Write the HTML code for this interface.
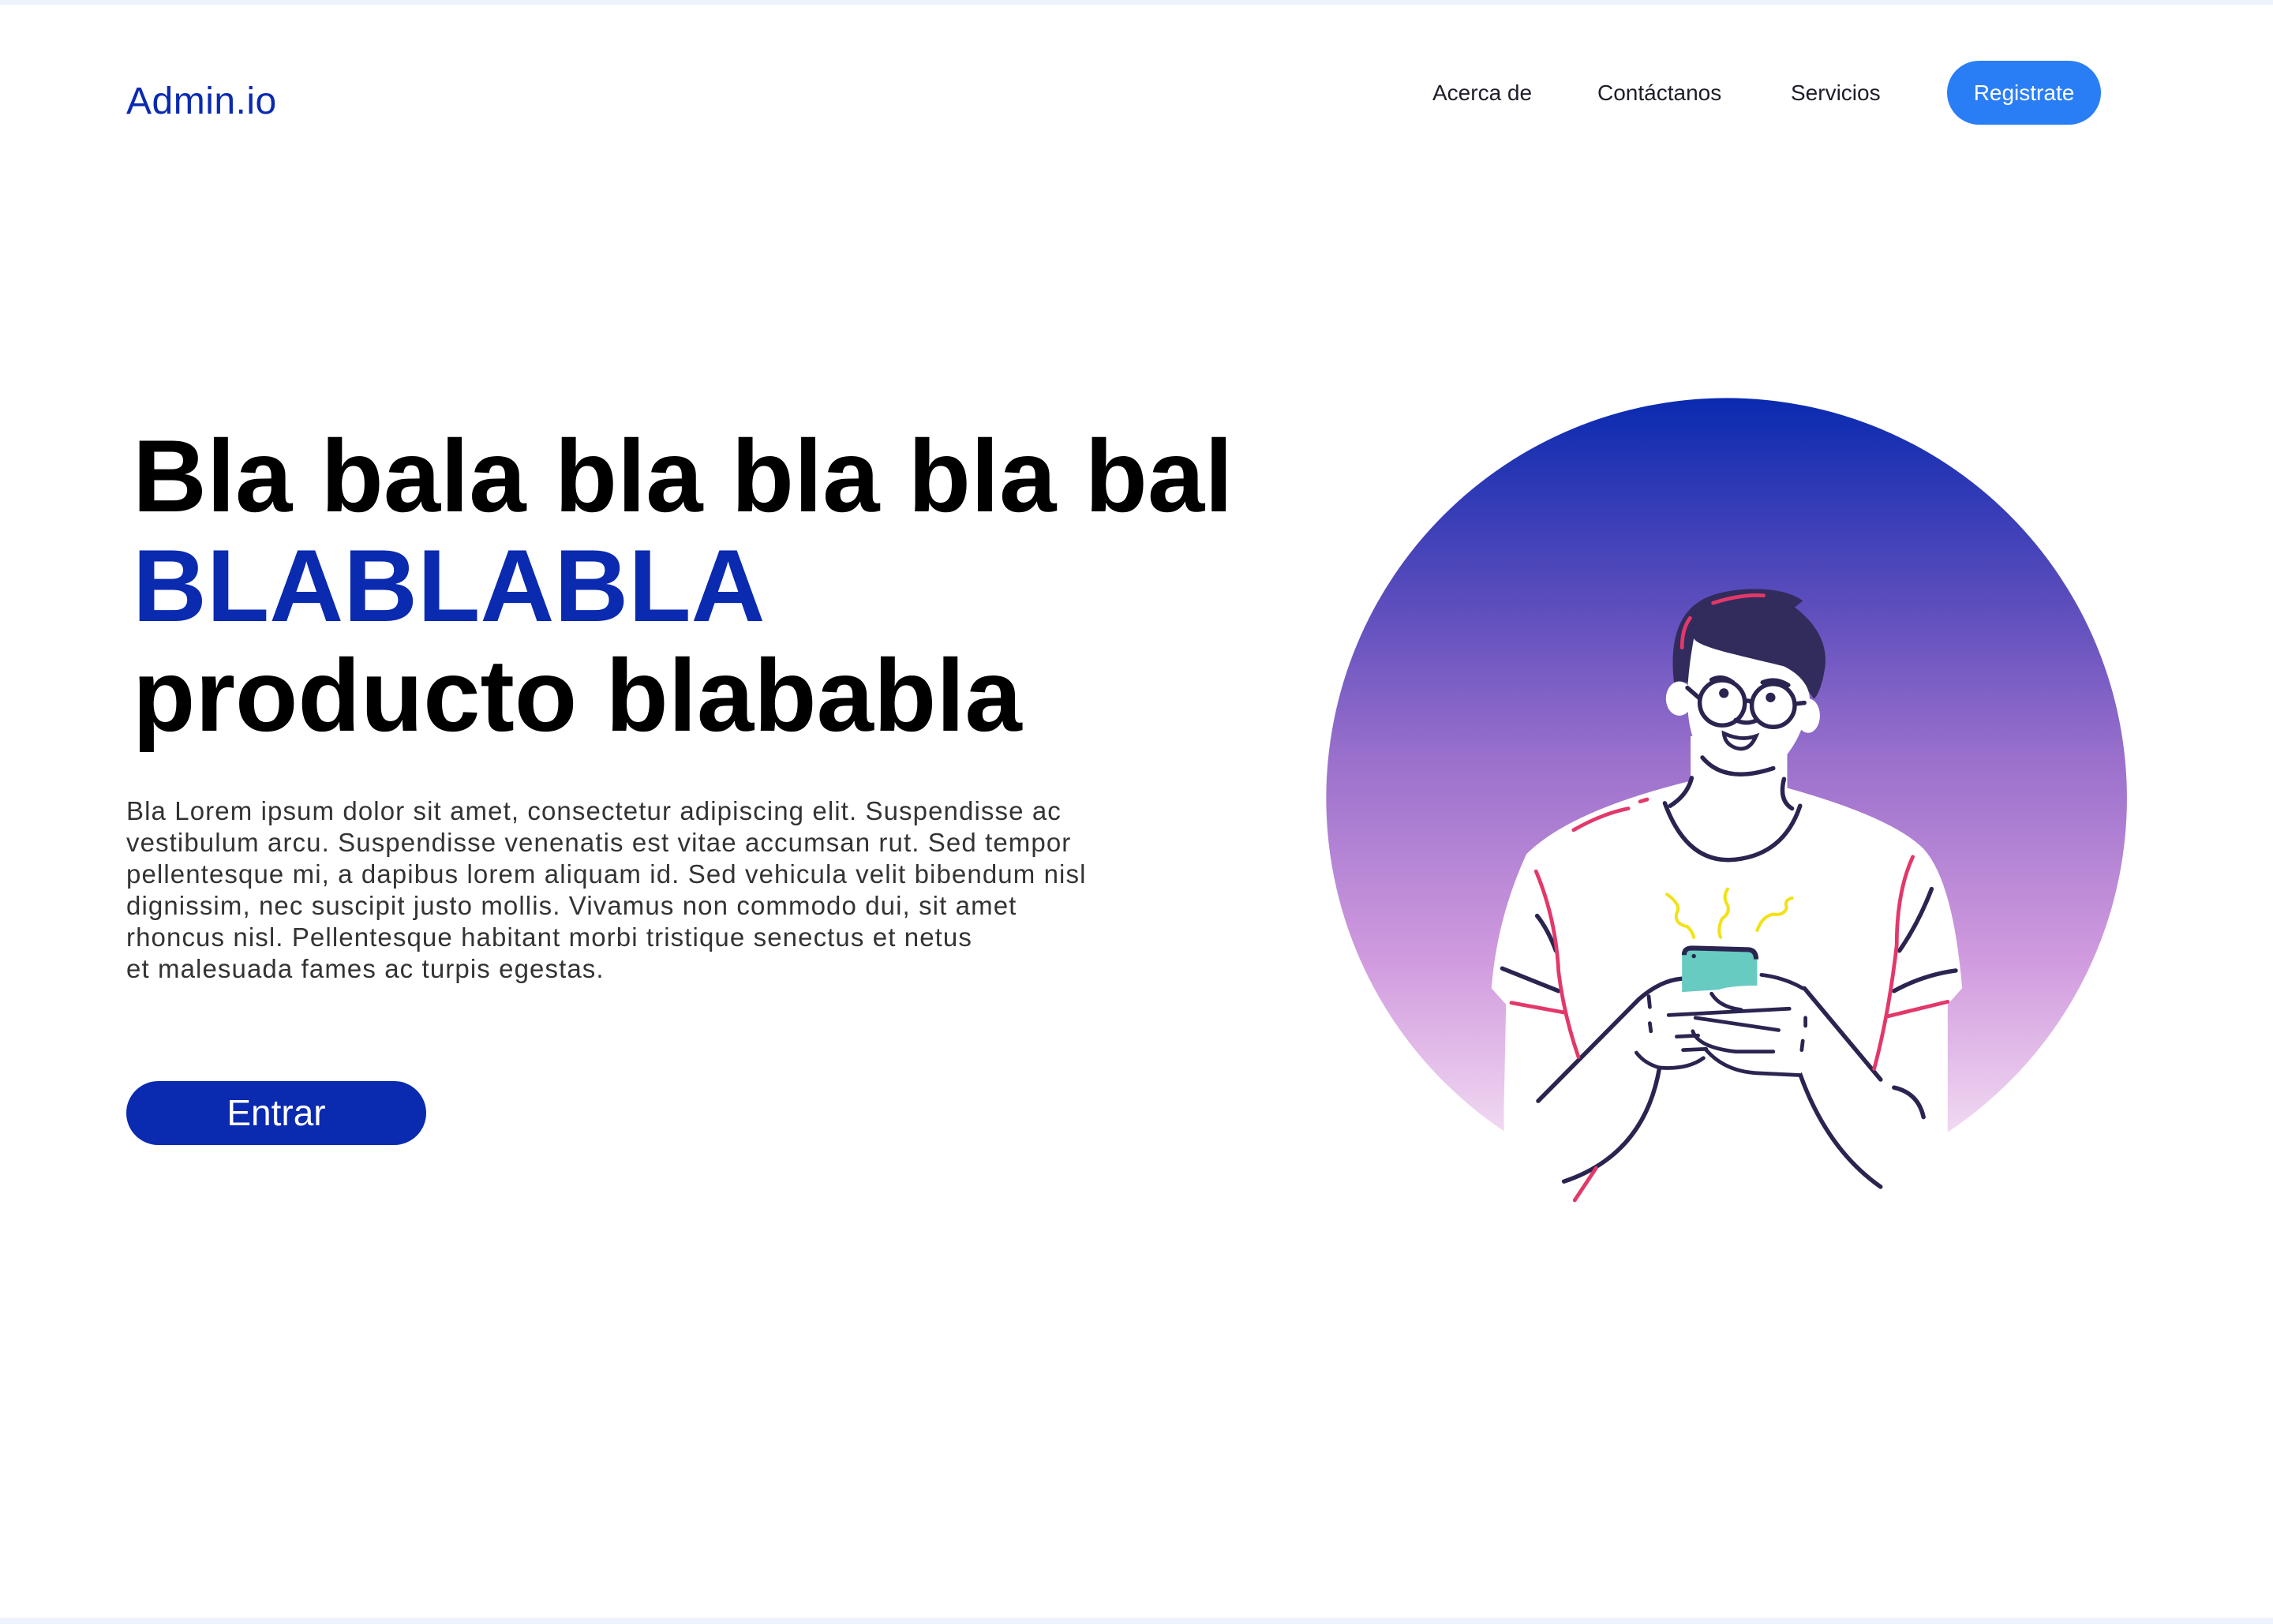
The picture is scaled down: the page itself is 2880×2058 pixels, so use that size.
<!DOCTYPE html>
<html><head><meta charset="utf-8">
<style>
html,body{margin:0;padding:0;}
body{width:2880px;height:2058px;position:relative;background:#fff;overflow:hidden;font-family:"Liberation Sans",sans-serif;}
.strip{position:absolute;left:0;width:2880px;height:6px;background:#eef2fc;}
.logo{position:absolute;left:160px;top:101px;font-size:48px;color:#0a2ab0;letter-spacing:0.5px;}
.nav{position:absolute;top:102px;font-size:28px;color:#1d1d2b;}
.reg{position:absolute;left:2467px;top:77px;width:195px;height:81px;border-radius:41px;background:#2a7ef5;color:#fff;font-size:28px;text-align:center;line-height:81px;}
h1{position:absolute;left:168px;top:534px;margin:0;font-size:130px;line-height:139px;font-weight:bold;color:#000;letter-spacing:0px;}
h1 span{color:#0a2ab0;}
.p{position:absolute;left:160px;top:1008px;font-size:33px;line-height:40px;color:#333;letter-spacing:1.1px;}
.btn{position:absolute;left:160px;top:1370px;width:380px;height:81px;border-radius:41px;background:#0a2ab0;color:#fff;font-size:46px;text-align:center;line-height:81px;}
svg{position:absolute;left:0;top:0;}
</style></head><body>
<div class="strip" style="top:0"></div>
<div class="strip" style="top:2050px;height:8px"></div>
<div class="logo">Admin.io</div>
<div class="nav" style="left:1815px">Acerca de</div>
<div class="nav" style="left:2024px">Contáctanos</div>
<div class="nav" style="left:2269px">Servicios</div>
<div class="reg">Registrate</div>
<h1>Bla bala bla bla bla bal<br><span>BLABLABLA</span><br>producto blababla</h1>
<div class="p">Bla Lorem ipsum dolor sit amet, consectetur adipiscing elit. Suspendisse ac<br>vestibulum arcu. Suspendisse venenatis est vitae accumsan rut. Sed tempor<br>pellentesque mi, a dapibus lorem aliquam id. Sed vehicula velit bibendum nisl<br>dignissim, nec suscipit justo mollis. Vivamus non commodo dui, sit amet<br>rhoncus nisl. Pellentesque habitant morbi tristique senectus et netus<br>et malesuada fames ac turpis egestas.</div>
<div class="btn">Entrar</div>
<svg width="2880" height="2058" viewBox="0 0 2880 2058">
<defs><linearGradient id="g" x1="0" y1="0" x2="0" y2="1">
<stop offset="0" stop-color="#0a2ab0"/><stop offset="0.25" stop-color="#5a4cbc"/><stop offset="0.45" stop-color="#9a70cc"/><stop offset="0.7" stop-color="#d09ade"/><stop offset="1" stop-color="#fdf0f9"/></linearGradient></defs>
<g transform="translate(1662,484) scale(0.68)">
<circle cx="773" cy="776" r="746" fill="url(#g)"/>
<path d="M360,1700 L358,1360 L362,1160 L335,1130 Q345,1000 400,880 Q480,800 700,745 L880,755 Q1080,810 1140,870 Q1195,930 1212,1130 L1185,1160 L1185,1700 Z" fill="#fff"/>
<rect x="706" y="660" width="180" height="130" fill="#fff"/>
<path d="M675,560 C665,470 690,420 740,400 C790,380 880,380 915,408 L900,420 C940,450 965,490 955,540 C950,570 940,590 935,590 C900,530 800,510 740,500 C725,495 715,485 712,478 L712,560 Z" fill="#312c5c"/>
<path d="M712,478 C720,495 800,510 880,530 C920,550 935,580 925,610 C915,650 895,690 870,710 C830,740 760,730 730,700 C700,660 690,600 712,478Z" fill="#fff"/>
<ellipse cx="685" cy="590" rx="25" ry="32" fill="#fff"/>
<ellipse cx="925" cy="622" rx="22" ry="32" fill="#fff"/>
<g fill="none" stroke="#2a2550" stroke-width="8" stroke-linecap="round">
<circle cx="765" cy="598" r="42"/><circle cx="860" cy="603" r="40"/>
<path d="M807,598 Q812,590 820,598 M700,570 L723,590 M900,600 L918,598 M745,555 Q765,545 785,560 M840,560 Q865,550 888,565 M790,630 Q810,640 830,630"/>
<path d="M728,700 Q770,750 860,720 M708,738 Q700,770 668,790 M880,740 Q870,780 895,795 M658,785 Q700,900 790,890 Q880,880 910,790"/>
<path d="M355,1093 L460,1135 M420,995 Q440,1020 455,1060 M1155,945 Q1130,1010 1095,1060 M1085,1135 Q1140,1105 1200,1097"/>
<path d="M422,1340 L610,1150 Q650,1115 690,1112 M918,1130 L1060,1300 M648,1278 Q620,1440 470,1490 M910,1290 Q960,1430 1060,1500 M1085,1315 Q1130,1325 1140,1370"/>
</g>
<circle cx="768" cy="580" r="9" fill="#2a2550"/><circle cx="855" cy="588" r="9" fill="#2a2550"/>
<path d="M768,655 Q800,670 828,660 Q815,690 790,682 Q770,675 768,655Z" fill="#fff" stroke="#2a2550" stroke-width="7"/>
<g fill="none" stroke="#e2386a" stroke-width="7" stroke-linecap="round">
<path d="M748,412 Q800,395 842,398 M705,440 Q690,460 690,495 M488,835 Q540,805 590,795 M612,782 L625,778"/>
<path d="M418,912 Q455,1000 460,1100 Q470,1180 497,1258 M372,1157 L470,1175 M1120,885 Q1090,950 1090,1050 Q1075,1180 1048,1280 M1070,1183 L1185,1155 M530,1465 L490,1525"/>
</g>
<path d="M690,1137 L690,1065 Q690,1052 705,1052 L815,1055 Q830,1057 830,1070 L830,1128 Z" fill="#67cbc2"/>
<path d="M694,1068 Q694,1055 708,1055 L815,1058 Q828,1060 828,1076" fill="none" stroke="#2a2550" stroke-width="9"/>
<circle cx="712" cy="1070" r="4" fill="#2a2550"/>
<path d="M745,1140 Q760,1125 830,1125 Q880,1120 915,1135 L930,1240 L910,1292 L830,1288 Q750,1275 720,1240 L690,1180 Z" fill="#fff"/>
<g fill="none" stroke="#2a2550" stroke-width="7" stroke-linecap="round">
<path d="M665,1180 L890,1168 M745,1140 Q760,1165 800,1170 M680,1220 L720,1218 M715,1185 L870,1208 M710,1210 Q720,1240 790,1248 L860,1248 M692,1245 L735,1243 M735,1245 Q770,1285 830,1288 L910,1292 M605,1250 Q620,1270 648,1278 Q700,1282 730,1260 M838,1105 Q880,1110 915,1130"/>
<path d="M628,1145 L630,1165 M630,1195 L632,1210 M920,1185 L920,1200 M915,1228 L913,1245"/>
</g>
<g fill="none" stroke="#f1e21a" stroke-width="6" stroke-linecap="round">
<path d="M662,955 Q690,975 680,990 Q675,1010 700,1015 Q710,1025 712,1035 M775,945 Q765,960 775,975 Q780,990 765,1000 Q755,1020 762,1035 M895,962 Q880,965 885,980 Q880,995 860,992 Q840,995 830,1022"/>
</g>
</g>
</svg>
</body></html>
